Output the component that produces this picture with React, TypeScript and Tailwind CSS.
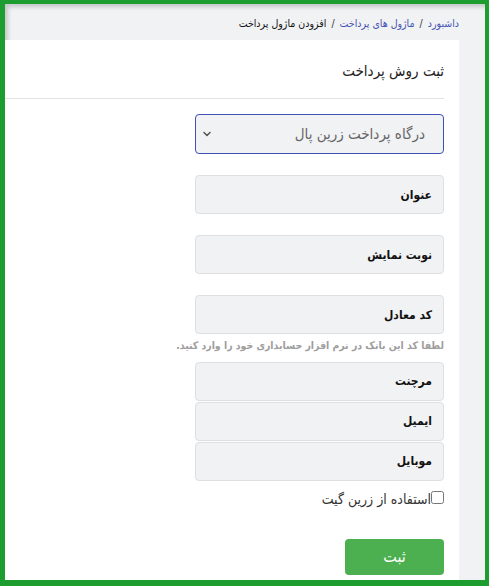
import { ChevronDown } from 'lucide-react';

const fields = ['عنوان', 'نوبت نمایش'];

const merchantFields = ['مرچنت', 'ایمیل', 'موبایل'];

function Field({ label }: { label: string }) {
  return (
    <div className="flex h-[39px] w-[249px] items-center rounded-[4px] border border-[#dedfe1] bg-[#f1f2f4] px-[11px] text-[12px] font-bold text-[#111]">
      {label}
    </div>
  );
}

export default function App() {
  return (
    <div
      className="h-[586px] w-[489px] bg-[#1d9d30] pb-[6px] pl-[5px] pr-[4px] pt-[4px]"
      style={{ fontFamily: '"DejaVu Sans Condensed", "DejaVu Sans", sans-serif' }}
    >
      <div
        dir="rtl"
        className="flex h-full flex-col bg-[#f1f2f4] shadow-[inset_3px_3px_4px_rgba(0,0,0,0.18)]"
      >
        <nav className="flex h-[36px] items-center gap-[5px] pr-[26px] pt-[3px] text-[10.5px]">
          <span className="text-[#4553b3]">داشبورد</span>
          <span className="text-[#333]">/</span>
          <span className="text-[#4553b3]">ماژول های پرداخت</span>
          <span className="text-[#333]">/</span>
          <span className="text-[#111]">افزودن ماژول پرداخت</span>
        </nav>

        <div className="flex flex-1">
          <div className="mr-[26px] flex-1 bg-white pr-[15px]">
            <div className="flex h-[59px] items-center border-b border-[#e2e2e2] pt-[4px] text-[15px] text-[#222]">
              ثبت روش پرداخت
            </div>

            <div className="flex flex-col items-start pt-[15px]">
              <div className="flex h-[40px] w-[249px] items-center justify-between rounded-[4px] border border-[#3f51b5] bg-[#f1f2f4] pl-[5px] pr-[18px] text-[15px] text-[#666]">
                <span>درگاه پرداخت زرین پال</span>
                <ChevronDown size={12} strokeWidth={3} className="text-[#555]" />
              </div>

              {fields.map((f) => (
                <div key={f} className="mt-[21px]">
                  <Field label={f} />
                </div>
              ))}

              <div className="mt-[21px]">
                <Field label="کد معادل" />
              </div>
              <p className="mt-[4px] whitespace-nowrap text-[10.4px] font-bold text-[#9e9e9e]">
                لطفا کد این بانک در نرم افزار حسابداری خود را وارد کنید.
              </p>

              <div className="mt-[8px] flex flex-col gap-[1px]">
                {merchantFields.map((m) => (
                  <Field key={m} label={m} />
                ))}
              </div>

              <label className="mt-[5px] flex items-center text-[14px] text-[#333]">
                <input type="checkbox" className="h-[13px] w-[13px]" />
                <span className="mt-[3px]">استفاده از زرین گیت</span>
              </label>

              <button className="mt-[29px] h-[36px] w-[99px] rounded-[4px] bg-[#4caf50] text-[16px] text-white">
                ثبت
              </button>
            </div>
          </div>
        </div>
      </div>
    </div>
  );
}
